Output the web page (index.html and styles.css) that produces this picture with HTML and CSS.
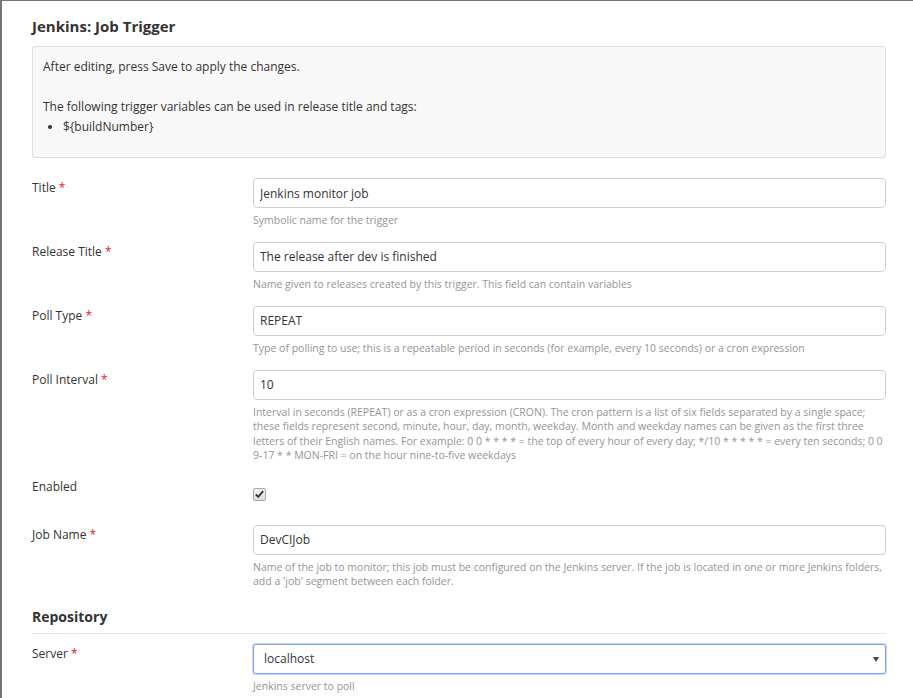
FILE: index.html
```html
<!DOCTYPE html>
<html>
<head>
<meta charset="utf-8">
<link rel="stylesheet" href="styles.css">
</head>
<body>
<div class="page">
  <h4 class="title">Jenkins: Job Trigger</h4>
  <div class="info">
    <p class="info-p first">After editing, press Save to apply the changes.</p>
    <p class="info-p">The following trigger variables can be used in release title and tags:</p>
    <ul class="vars"><li>${buildNumber}</li></ul>
  </div>

  <div class="row">
    <label class="lbl">Title <span class="req">*</span></label>
    <div class="ctl">
      <input class="field" type="text" value="Jenkins monitor job">
      <div class="help">Symbolic name for the trigger</div>
    </div>
  </div>

  <div class="row">
    <label class="lbl">Release Title <span class="req">*</span></label>
    <div class="ctl">
      <input class="field" type="text" value="The release after dev is finished">
      <div class="help">Name given to releases created by this trigger. This field can contain variables</div>
    </div>
  </div>

  <div class="row">
    <label class="lbl">Poll Type <span class="req">*</span></label>
    <div class="ctl">
      <input class="field" type="text" value="REPEAT">
      <div class="help">Type of polling to use; this is a repeatable period in seconds (for example, every 10 seconds) or a cron expression</div>
    </div>
  </div>

  <div class="row">
    <label class="lbl">Poll Interval <span class="req">*</span></label>
    <div class="ctl">
      <input class="field" type="text" value="10">
      <div class="help">Interval in seconds (REPEAT) or as a cron expression (CRON). The cron pattern is a list of six fields separated by a single space; these fields represent second, minute, hour, day, month, weekday. Month and weekday names can be given as the first three letters of their English names. For example: 0 0 * * * * = the top of every hour of every day; */10 * * * * * = every ten seconds; 0 0 9-17 * * MON-FRI = on the hour nine-to-five weekdays</div>
    </div>
  </div>

  <div class="row row-check">
    <label class="lbl">Enabled</label>
    <div class="ctl">
      <span class="checkbox"><svg width="9" height="8" viewBox="0 0 9 8"><path d="M0.8 4.4 L3.2 6.8 L8.2 1.2" fill="none" stroke="#333" stroke-width="1.9"/></svg></span>
    </div>
  </div>

  <div class="row">
    <label class="lbl">Job Name <span class="req">*</span></label>
    <div class="ctl">
      <input class="field" type="text" value="DevCIJob">
      <div class="help">Name of the job to monitor; this job must be configured on the Jenkins server. If the job is located in one or more Jenkins folders, add a 'job' segment between each folder.</div>
    </div>
  </div>

  <h4 class="section">Repository</h4>

  <div class="row">
    <label class="lbl">Server <span class="req">*</span></label>
    <div class="ctl">
      <div class="select-wrap">
        <select class="field select"><option>localhost</option></select>
      </div>
      <div class="help">Jenkins server to poll</div>
    </div>
  </div>
</div>
</body>
</html>
```

FILE: styles.css
```css
html, body {
  margin: 0;
  padding: 0;
  background: #fff;
}
body {
  font-family: "Open Sans", "Liberation Sans", sans-serif;
  font-size: 12px;
  color: #333;
}
.page {
  border-left: 2px solid #767676;
  border-top: 1px solid #767676;
  padding: 15px 27px 20px 30px;
  min-height: 700px;
  box-sizing: border-box;
}
.title {
  margin: 0 0 10px 0;
  font-size: 15px;
  font-weight: 700;
  line-height: 20px;
  color: #333;
}
.info {
  background: #f8f8f8;
  border: 1px solid #dedede;
  border-radius: 3px;
  padding: 10px 10px 20px 10px;
  line-height: 20px;
  margin-bottom: 20px;
}
.info-p {
  margin: 0;
}
.info-p.first {
  margin-bottom: 20px;
}
.vars {
  margin: 0;
  padding-left: 20px;
}
.row {
  display: grid;
  grid-template-columns: 191px 1fr;
  column-gap: 30px;
  margin-bottom: 14.7px;
}
.lbl {
  line-height: 19px;
  color: #333;
}
.req {
  color: #e4202b;
}
.field {
  display: block;
  box-sizing: border-box;
  width: 100%;
  height: 30px;
  border: 1px solid #cfcfcf;
  border-radius: 4px;
  padding: 0 6px;
  font-family: "Open Sans", "Liberation Sans", sans-serif;
  font-size: 12px;
  color: #333;
  background: #fff;
  margin: 0;
}
.help {
  margin-top: 5px;
  font-size: 10.5px;
  line-height: 14.3px;
  color: #959595;
}
.row-check .ctl {
  height: 33px;
  box-sizing: border-box;
  padding-top: 11px;
}
.checkbox {
  display: flex;
  align-items: center;
  justify-content: center;
  width: 11px;
  height: 11px;
  border: 1px solid #a9a9a9;
  border-radius: 2px;
  background: linear-gradient(#f4f4f4, #dcdcdc);
}
.section {
  margin: 0 0 10px 0;
  padding: 4px 0 6px 0;
  border-bottom: 1px solid #e5e5e5;
  font-size: 14px;
  font-weight: 700;
  line-height: 20px;
  color: #333;
}
.select-wrap {
  position: relative;
}
.select {
  appearance: none;
  -webkit-appearance: none;
  padding-left: 10px;
  border: 1px solid #7ea6ec;
  box-shadow: 0 0 0 1px rgba(126, 166, 236, 0.45);
  border-radius: 3px;
  outline: none;
}
.select-wrap::after {
  content: "";
  position: absolute;
  right: 7px;
  top: 13px;
  width: 0;
  height: 0;
  border-left: 3.5px solid transparent;
  border-right: 3.5px solid transparent;
  border-top: 5px solid #444;
}
```
